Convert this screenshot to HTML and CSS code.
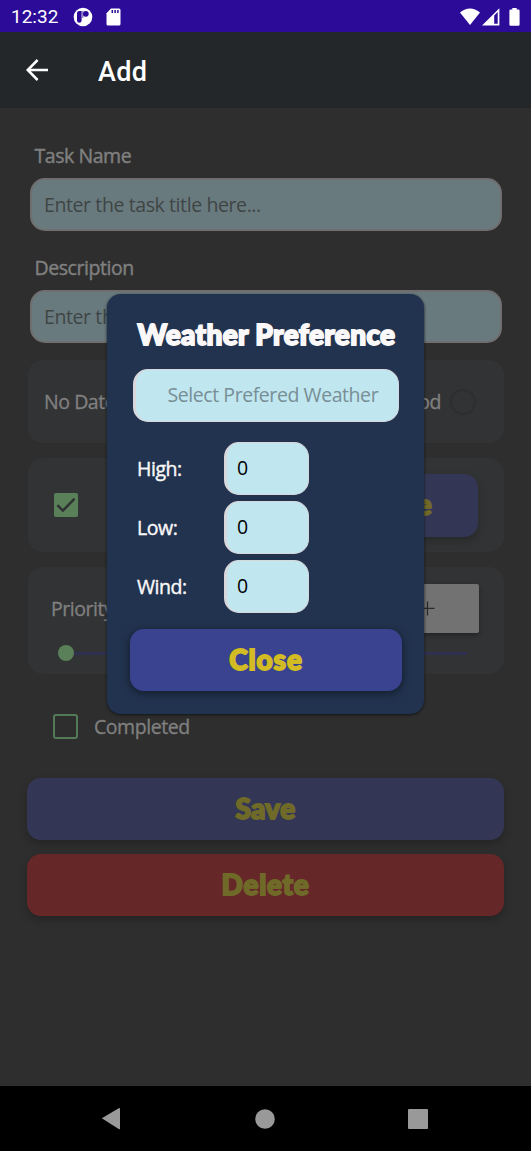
FILE: index.html
```html
<!DOCTYPE html>
<html lang="en">
<head>
<meta charset="utf-8">
<title>Add</title>
<link rel="stylesheet" href="styles.css">
</head>
<body>
<div class="screen">
  <header class="status">
    <span class="clock">12:32</span>
    <svg class="status-app" width="20" height="20" viewBox="0 0 20 20"><circle cx="10" cy="10" r="9.3" fill="#fff"/><path d="M4 6.2Q4 4 6.2 4H8.6V13.5A2.3 2.3 0 0 1 4 13.5Z" fill="#2c0b98"/><circle cx="12.8" cy="6.8" r="2.9" fill="#2c0b98"/><path d="M9.8 4V11" stroke="#2c0b98" stroke-width=".7"/></svg>
    <svg class="status-sd" width="15" height="18" viewBox="0 0 15 18"><path d="M5 .5H13Q14.5.5 14.5 2V16Q14.5 17.5 13 17.5H2Q.5 17.5.5 16V5.3Z" fill="#fff"/><path d="M6.3 2V5M9.1 2V5M11.9 2V5" stroke="#2c0b98" stroke-width="1.5"/></svg>
    <span class="spacer"></span>
    <svg width="20" height="18" viewBox="0 0 20 18"><path d="M0 4.4Q10-3.6 20 4.4L10 17Z" fill="#fff"/></svg>
    <svg class="status-signal" width="18" height="18" viewBox="0 0 18 18"><path d="M0 17.6 17.4.3V17.6Z" fill="#fff"/><path d="M12.2 7.6 15.7 4V15.8H12.2Z" fill="#2c0b98"/></svg>
    <svg class="status-battery" width="11" height="18" viewBox="0 0 11 18"><path d="M3.3 0H7.7V1.6H9.4Q10.6 1.6 10.6 2.8V16.5Q10.6 17.7 9.4 17.7H1.6Q.4 17.7.4 16.5V2.8Q.4 1.6 1.6 1.6H3.3Z" fill="#fff"/></svg>
  </header>
  <div class="appbar">
    <svg width="22" height="22" viewBox="0 0 22 22" fill="none" stroke="#fff" stroke-width="2.5"><path d="M22 11H2M11.6 1 1.7 11 11.6 21"/></svg>
    <h1>Add</h1>
  </div>
  <main class="form">
    <label class="label">Task Name</label>
    <div class="field">Enter the task title here...</div>
    <label class="label second">Description</label>
    <div class="field">Enter the</div>
    <section class="card dates"><span>No Date</span><span class="spacer"></span><span>Period</span><i class="radio"></i></section>
    <section class="card weather">
      <svg width="26" height="26" viewBox="0 0 26 26"><rect x="1" y="1" width="24" height="24" rx="2" fill="#5a8059"/><path d="M4.4 13.2 9.9 18.6 21.6 6.7" fill="none" stroke="#2f3032" stroke-width="2.4"/></svg>
      <span class="spacer"></span>
      <div class="button open">Choose</div>
    </section>
    <section class="card priority">
      <div class="priority-row"><span>Priority</span><div class="plus"><svg width="15" height="15" viewBox="0 0 15 15"><path d="M7.5.5V14.5M.5 7.3H14.5" stroke="#292929" stroke-width="1.3"/></svg></div></div>
      <div class="slider"><i></i></div>
    </section>
    <div class="completed"><i></i><span>Completed</span></div>
    <div class="button save">Save</div>
    <div class="button delete">Delete</div>
  </main>
  <nav class="nav">
    <svg width="20" height="24" viewBox="0 0 20 24"><path d="M.8 11.3 17.7 1.2Q19 .5 19 1.8V21.4Q19 22.7 17.7 22Z" fill="#999"/></svg>
    <svg width="20" height="20" viewBox="0 0 20 20"><circle cx="10" cy="10" r="9.8" fill="#999"/></svg>
    <svg width="20" height="20" viewBox="0 0 20 20"><rect width="20" height="20" rx="1" fill="#999"/></svg>
  </nav>
  <div class="dialog">
    <h2>Weather Preference</h2>
    <div class="entry select">Select Prefered Weather</div>
    <div class="row"><span>High:</span><div class="entry">0</div></div>
    <div class="row"><span>Low:</span><div class="entry">0</div></div>
    <div class="row"><span>Wind:</span><div class="entry">0</div></div>
    <div class="button close">Close</div>
  </div>
</div>
</body>
</html>
```
FILE: styles.css
```css
* { box-sizing: border-box; }
body { margin: 0; background: #2e2e2e; }
svg { display: block; flex: none; }
.screen { position: relative; width: 531px; height: 1151px; overflow: hidden; display: flex; flex-direction: column; background: #2e2e2e; color: #808080; font: 19.5px "Open Sans", sans-serif; letter-spacing: -.45px; }
.spacer { flex: 1; }
.status { height: 32px; flex: none; display: flex; align-items: center; padding: 1px 11px 0; background: #2c0b98; color: #fff; }
.clock { font: 19px/32px Roboto, sans-serif; letter-spacing: 0; width: 62px; padding-top: 1px; }
.status-sd { margin-left: 13px; }
.status-signal { margin-left: 2px; }
.status-battery { margin-left: 9px; }
.appbar { height: 76px; flex: none; display: flex; align-items: center; padding-left: 26px; background: #23272a; color: #fff; }
.appbar svg { margin-bottom: 1px; }
.appbar h1 { margin: 3px 0 0 50px; font: 500 27px/32px Roboto, sans-serif; letter-spacing: .3px; }
.form { flex: 1; padding: 30px 27px 0 28px; }
.label { display: block; height: 40px; padding: 4px 6.5px; line-height: 28px; -webkit-text-stroke: .4px; }
.label.second { margin-top: 19px; }
.field { height: 53px; margin: 0 2px 0 2px; border: 2px solid #716e70; border-radius: 15px; background: #697a7e; color: #3f4545; line-height: 49px; padding-left: 12px; letter-spacing: -.4px; }
.card { border-radius: 15px; background: #323335; display: flex; -webkit-text-stroke: .3px; }
.dates { height: 83px; margin-top: 17px; align-items: center; padding: 0 28px 0 16px; }
.radio { width: 26px; height: 26px; margin-left: 9px; border: 2px solid #2d2e30; border-radius: 50%; }
.weather { height: 94px; margin-top: 15px; align-items: center; padding: 0 26px 0 25px; }
.button { display: flex; align-items: center; justify-content: center; border-radius: 14px; background: #333755; color: #706a29; font: 900 28px "Lato", sans-serif; letter-spacing: .3px; padding-bottom: 2px; -webkit-text-stroke: 1.8px; box-shadow: 0 4px 9px rgba(0,0,0,.22); }
.open { width: 180px; height: 63px; justify-content: flex-end; padding-right: 46px; }
.priority { height: 107px; margin-top: 15px; display: block; padding: 17px 25px 0 23px; }
.priority-row { display: flex; align-items: center; justify-content: space-between; height: 49px; }
.plus { display: flex; align-items: center; justify-content: center; width: 104px; height: 49px; border-radius: 2px; background: #727272; box-shadow: 0 2px 5px rgba(0,0,0,.35); }
.slider { display: flex; align-items: center; height: 18px; width: 409px; margin: 11px 0 0 7px; background: linear-gradient(#303050, #303050) center / 100% 3px no-repeat; }
.slider i { width: 16px; height: 16px; border-radius: 50%; background: #5a8059; }
.completed { display: flex; align-items: center; height: 30px; margin: 37px 0 0 25px; gap: 16px; }
.completed i { width: 25px; height: 25px; border: 2.5px solid #547956; border-radius: 3px; }
.completed span { -webkit-text-stroke: .3px; }
.save { height: 62px; margin: 37px 0 14px -1px; }
.delete { height: 62px; margin: 0 0 0 -1px; background: #662729; letter-spacing: .7px; }
.nav { height: 65px; flex: none; display: flex; align-items: center; justify-content: space-between; padding: 0 103px 0 101px; background: #000; }
.dialog { position: absolute; left: 107px; top: 294px; width: 317px; height: 420px; border-radius: 14px; background: #22334f; color: #faf8f8; box-shadow: 0 1px 3px #101418; padding: 22px 22px 0 23px; }
.dialog h2 { margin: 0 0 15px 7.5px; font: 900 28px/37px "Lato", sans-serif; padding-bottom: 1px; letter-spacing: .35px; white-space: nowrap; -webkit-text-stroke: 1.8px; }
.entry { width: 85px; height: 53px; border: 1.5px solid #d8d8dc; border-left-width: 3px; border-radius: 15px; background: #c0e6f0; color: #000; line-height: 50px; padding-left: 10px; }
.select { width: 266px; margin: 0 0 20px 3px; color: #788f95; padding-left: 31.5px; letter-spacing: -.43px; white-space: nowrap; }
.row { display: flex; align-items: center; margin-bottom: 6px; padding-left: 7px; }
.row span { width: 87px; padding-bottom: 1px; -webkit-text-stroke: .4px; }
.close { width: 272px; height: 62px; margin-top: 16px; background: #394390; color: #d2bb23; letter-spacing: .9px; box-shadow: 0 2px 9px rgba(0,0,0,.5); }
```
